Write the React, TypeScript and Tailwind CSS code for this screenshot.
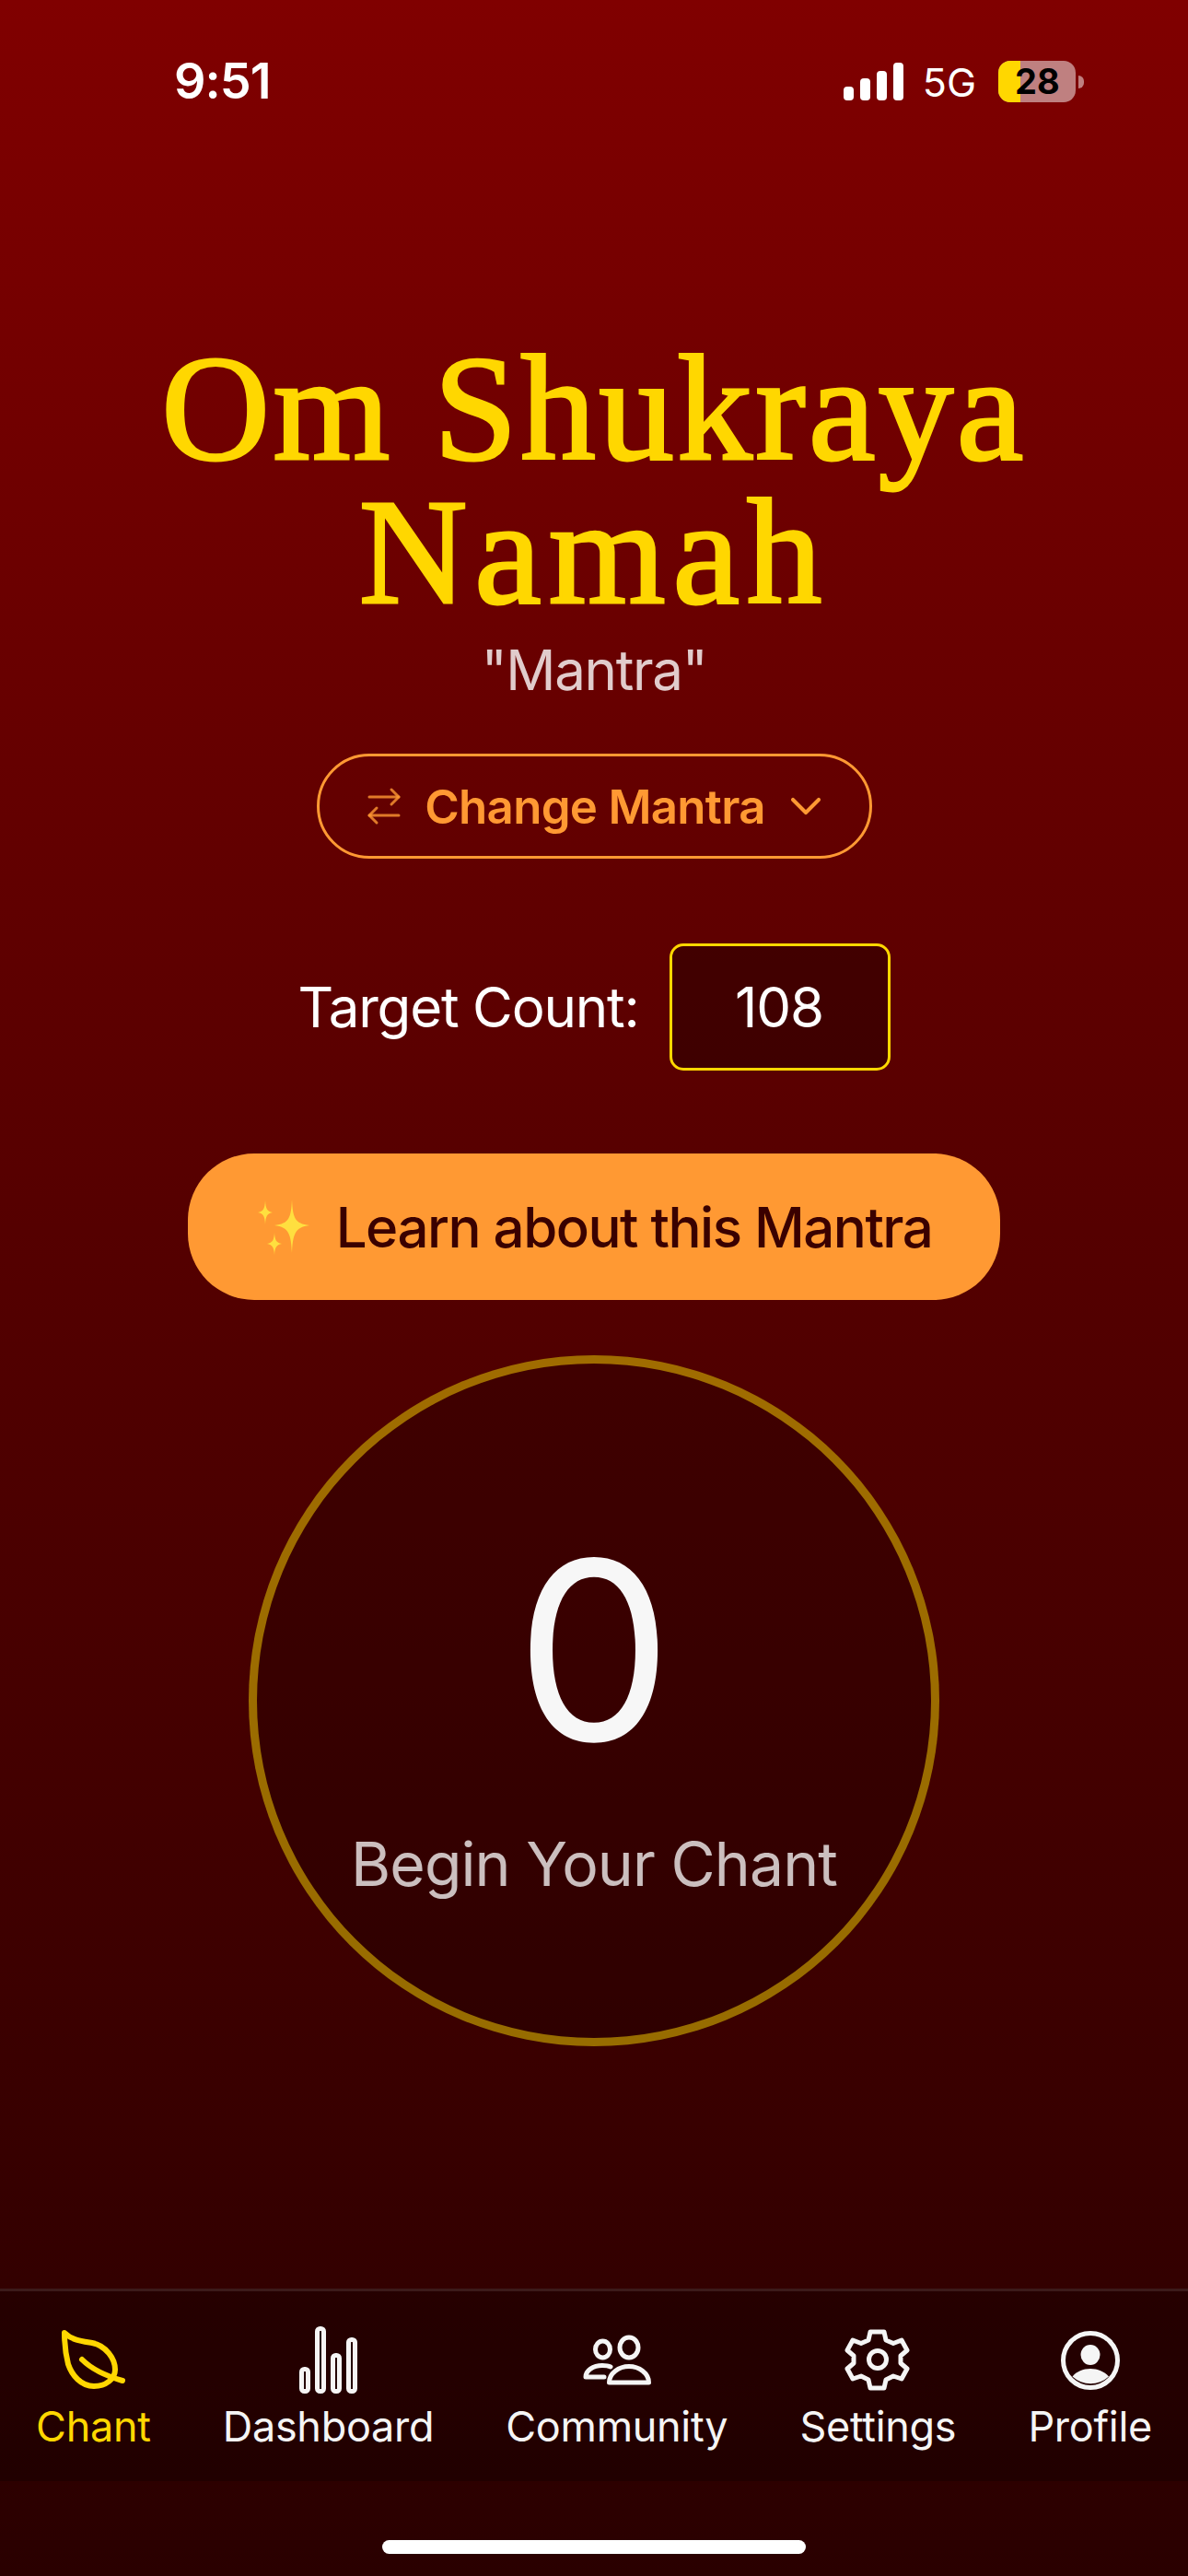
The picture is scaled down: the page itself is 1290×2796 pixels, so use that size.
import { ArrowRightLeft, ChevronDown } from "lucide-react";
import { ReactNode } from "react";

const inter = "font-['Inter',sans-serif]";

function LeafIcon() {
  return (
    <svg viewBox="1 0 100 100" className="h-[100px] w-[100px]" fill="none" stroke="currentColor" strokeWidth="6" strokeLinecap="round" strokeLinejoin="round">
      <path d="M20 22C28 30 38 31 50 33C65 36 75 50 75 62C75 72 65 80 52 80C38 80 28 68 24 56C21 44 20 32 20 22Z" />
      <path d="M39 51C48 60 62 68 83 74" />
    </svg>
  );
}

function BarsIcon() {
  return (
    <svg viewBox="0 0 100 100" className="h-[100px] w-[100px]" fill="none" stroke="currentColor" strokeWidth="5">
      <rect x="21.5" y="61.5" width="7" height="24" rx="3" />
      <rect x="38.5" y="17.5" width="7" height="68" rx="3" />
      <rect x="55.5" y="46.5" width="7" height="39" rx="3" />
      <rect x="72.5" y="29.5" width="7" height="56" rx="3" />
    </svg>
  );
}

function CommunityIcon() {
  return (
    <svg viewBox="-2 0 100 100" className="h-[100px] w-[100px]" fill="none" stroke="currentColor" strokeWidth="5" strokeLinecap="round" strokeLinejoin="round">
      <ellipse cx="61" cy="38" rx="10" ry="11" />
      <ellipse cx="32.5" cy="40" rx="8" ry="9" />
      <path d="M39.500 76C39.500 66 50 58.500 61 58.500C72 58.500 82.500 66 82.500 76Z" />
      <path d="M41 59C38 57.500 35 57.500 32 57.500C22 57.500 14 63 14 70H34" />
    </svg>
  );
}

function GearIcon() {
  return (
    <svg viewBox="2 0 100 100" className="h-[100px] w-[100px]" fill="none" stroke="currentColor" strokeWidth="5" strokeLinejoin="round">
      <path d="M44 21H59L61 30L69 33.500L78 30L84 41L77 47V55L84 61L78 72L69 69L61 73L59 82H44L42 73L34 69L25 72L19 61L26 55V47L19 41L25 30L34 33.500L42 30Z" />
      <circle cx="52" cy="51" r="9.500" />
    </svg>
  );
}

function ProfileIcon() {
  return (
    <svg viewBox="3 0 100 100" className="h-[100px] w-[100px]" fill="none">
      <circle cx="53" cy="52" r="29.500" stroke="currentColor" strokeWidth="5" />
      <ellipse cx="53" cy="46" rx="10.500" ry="11" fill="currentColor" />
      <path d="M33.500 69.500C38 64 45 61 53 61C61 61 68 64 73 69.500A29 29 0 0 1 33.500 69.500Z" fill="currentColor" />
    </svg>
  );
}

function Sparkles() {
  return (
    <svg viewBox="0 0 60 64" className="h-16 w-[60px] shrink-0" fill="#ffdf3f">
      <path d="M39 2C40 22 42 28 58 30C42 32 40 40 39 60C38 40 36 32 20 30C36 28 38 22 39 2Z" />
      <path d="M10 3C10.500 12 12 15 18 16C12 17 10.500 20 10 29C9.500 20 8 17 2 16C8 15 9.500 12 10 3Z" />
      <path d="M20 38C20.500 46 22 49 28 50C22 51 20.500 54 20 62C19.500 54 18 51 12 50C18 49 19.500 46 20 38Z" />
    </svg>
  );
}

type NavItem = { label: string; icon: ReactNode; active?: boolean };

const navItems: NavItem[] = [
  { label: "Chant", icon: <LeafIcon />, active: true },
  { label: "Dashboard", icon: <BarsIcon /> },
  { label: "Community", icon: <CommunityIcon /> },
  { label: "Settings", icon: <GearIcon /> },
  { label: "Profile", icon: <ProfileIcon /> },
];

function StatusBar() {
  return (
    <div className="flex h-[177px] items-start justify-between pl-[189px] pr-[113px] pt-[56px] text-white">
      <span className={`${inter} text-[54px] font-semibold leading-[64px] tracking-[-1px]`}>9:51</span>
      <div className="flex items-end pt-[10px]">
        <div className="flex items-end gap-[7px]">
          <span className="h-[15px] w-[11px] rounded-[4px] bg-white" />
          <span className="h-6 w-[11px] rounded-[4px] bg-white" />
          <span className="h-8 w-[11px] rounded-[4px] bg-white" />
          <span className="h-[41px] w-[11px] rounded-[4px] bg-white" />
        </div>
        <span className={`${inter} mb-[2px] ml-[21px] text-[43px] leading-[36px]`}>5G</span>
        <div className="relative mb-[-2px] ml-6 flex h-[45px] w-[84px] overflow-hidden rounded-[13px] bg-[#bf8080]">
          <span className="h-full w-[24px] bg-[#ffd700]" />
          <span className={`${inter} absolute left-[18px] top-0 text-[38px] font-bold leading-[45px] text-black`}>28</span>
        </div>
        <span className="mb-[13px] ml-[3px] h-[14px] w-[6px] rounded-r-full bg-[#bf8080]" />
      </div>
    </div>
  );
}

export default function App() {
  return (
    <div className="flex h-[2796px] w-[1290px] flex-col overflow-hidden bg-gradient-to-b from-[#800000] to-[#2a0000]">
      <StatusBar />

      <main className="flex flex-1 flex-col items-center">
        <h1 className="mt-[188px] w-full text-center font-['Liberation_Serif',serif] text-[163px] font-normal leading-[156px] text-[#ffd700] [-webkit-text-stroke:3px_#ffd700]">
          <span className="tracking-[3.5px]">Om Shukraya</span>
          <br />
          <span className="tracking-[8px]">Namah</span>
        </h1>
        <p className={`${inter} mt-2 text-[60px] leading-[84px] tracking-[-1.3px] text-white/80`}>"Mantra"</p>

        <button className="mt-[49px] flex h-[114px] w-[603px] items-center justify-center rounded-full border-[3px] border-[#ff9933] pl-[6px] text-[#ff9933]">
          <ArrowRightLeft className="h-12 w-12 text-[#ff9933]/80" strokeWidth={1.5} />
          <span className={`${inter} ml-5 text-[51px] font-semibold leading-none tracking-[-0.7px]`}>Change Mantra</span>
          <ChevronDown className="ml-4 h-14 w-14" strokeWidth={1.75} />
        </button>

        <div className={`${inter} ml-[1px] mt-[92px] flex items-center gap-[34px] text-[60px] tracking-[-1.2px] text-white`}>
          <span className="leading-none">Target Count:</span>
          <div className="flex h-[138px] w-[240px] items-center justify-center rounded-[15px] border-[3px] border-[#ffd700] bg-black/30 pr-[3px]">
            108
          </div>
        </div>

        <button className="mt-[90px] flex h-[159px] w-[882px] items-center justify-center gap-[27px] rounded-[72px] bg-[#ff9933]">
          <Sparkles />
          <span className={`${inter} text-[60px] font-[450] leading-none tracking-[-1.5px] text-[#3a0000]`}>Learn about this Mantra</span>
        </button>

        <div className="mt-[60px] flex h-[750px] w-[750px] flex-col items-center rounded-full border-[9px] border-[#ffd700]/50 bg-black/20 pt-[176px]">
          <span className={`${inter} text-[270px] font-normal leading-none text-[#f7f7f7]`}>0</span>
          <span className={`${inter} mt-[55px] text-[66px] leading-[84px] tracking-[-0.9px] text-white/75`}>Begin Your Chant</span>
        </div>
      </main>

      <nav className="flex h-[209px] justify-around border-t-[3px] border-white/10 bg-black/25 pt-[23px]">
        {navItems.map((item) => (
          <div key={item.label} className={`flex flex-col items-center ${item.active ? "text-[#ffd700]" : "text-[#f5f5f5]"}`}>
            {item.icon}
            <span className={`${inter} -mt-[3px] text-[45px] leading-[54px] tracking-[-0.3px]`}>{item.label}</span>
          </div>
        ))}
      </nav>

      <div className="flex h-[103px] justify-center pt-[64px]">
        <span className="h-[15px] w-[460px] rounded-full bg-white" />
      </div>
    </div>
  );
}
